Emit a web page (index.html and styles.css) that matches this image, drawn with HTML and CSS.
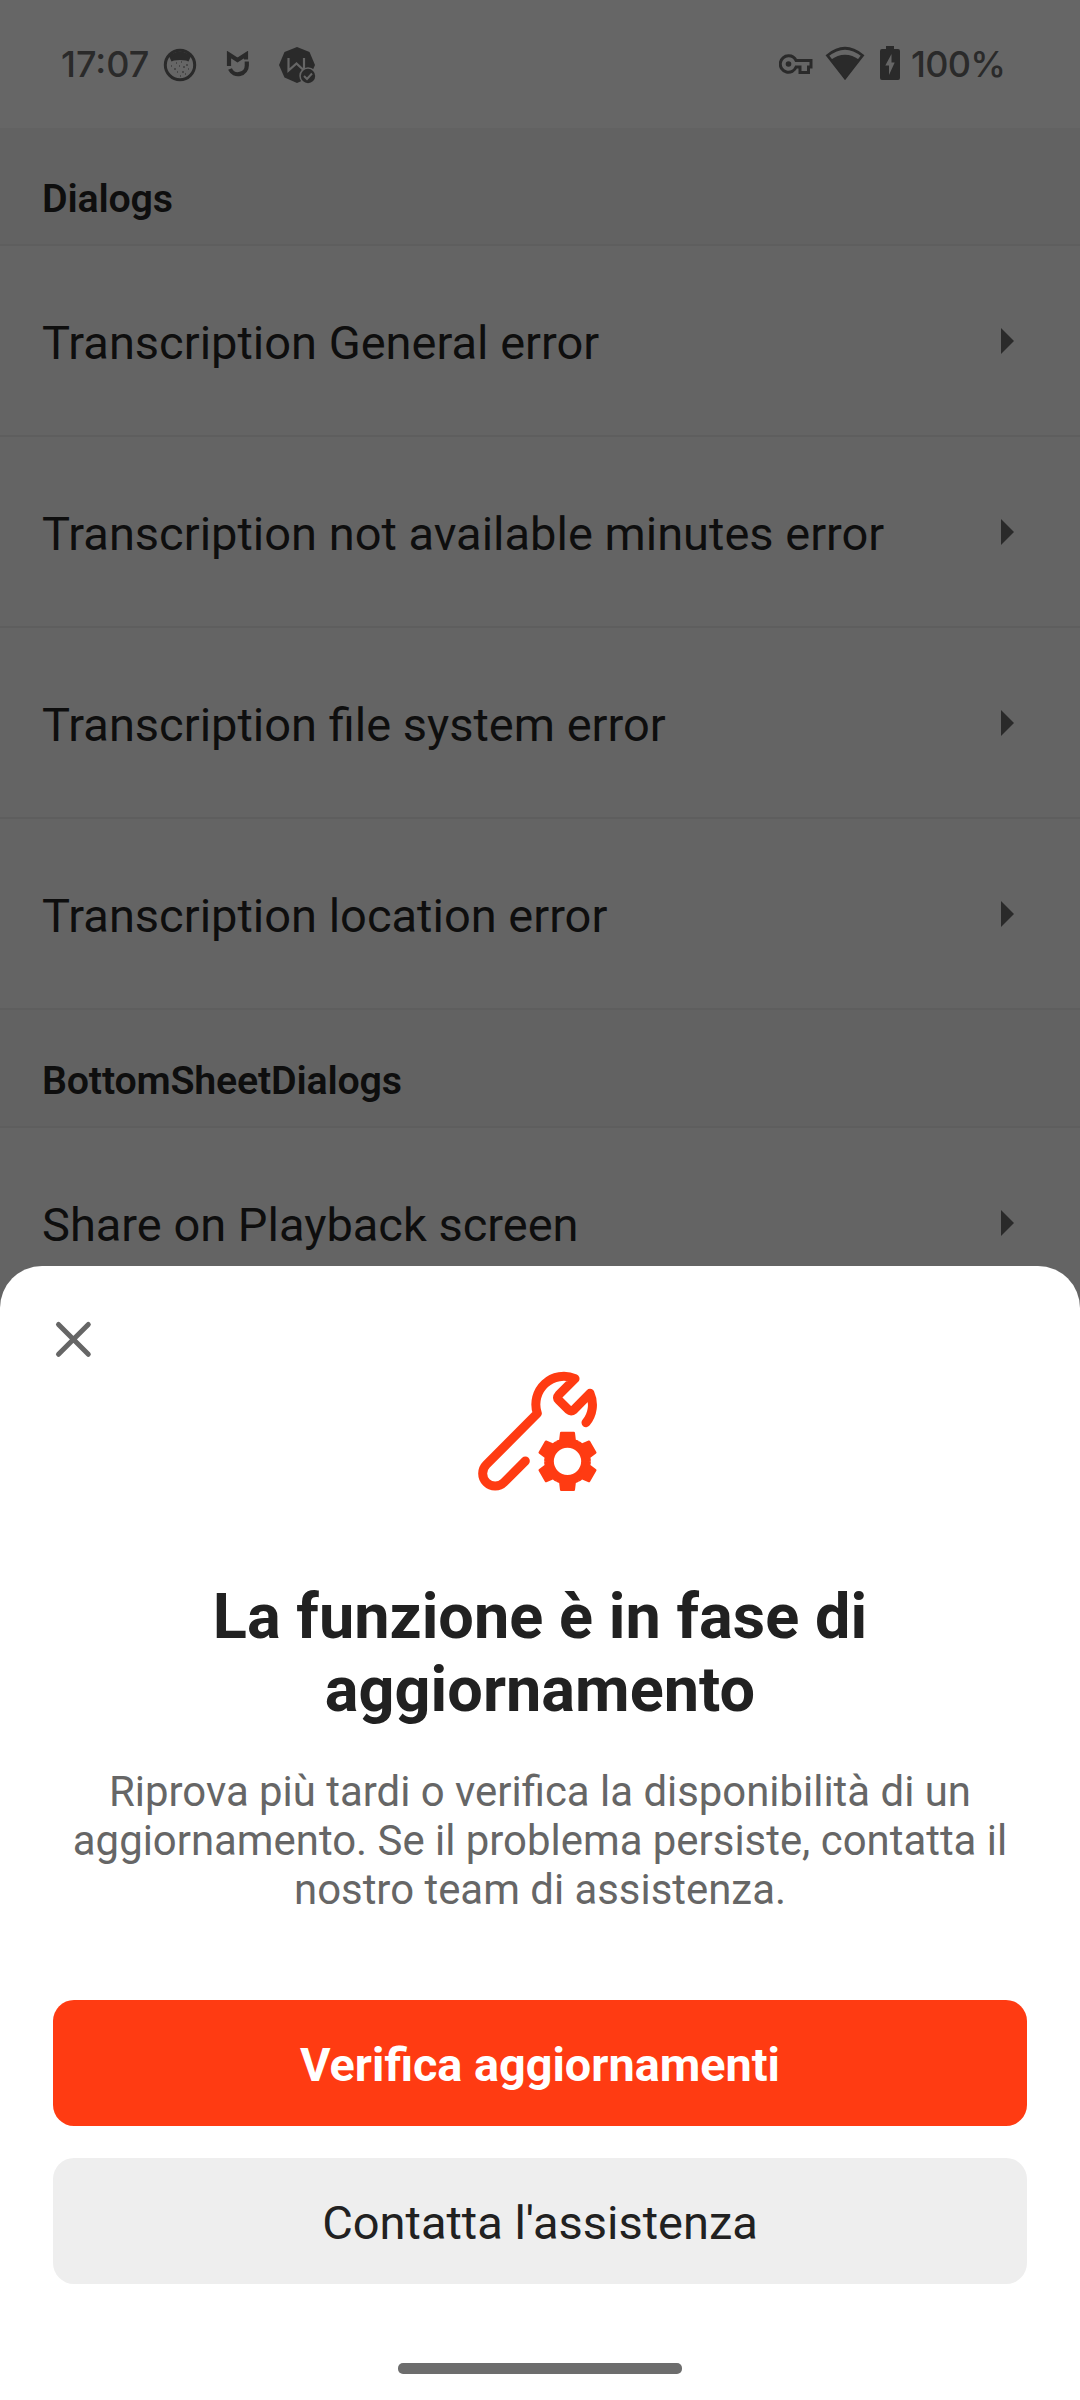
FILE: index.html
```html
<!DOCTYPE html>
<html lang="it">
<head>
<meta charset="utf-8">
<title>Dialogs</title>
<link rel="stylesheet" href="styles.css">
</head>
<body>
<div class="screen">
  <header class="status">
    <span class="clock">17:07</span>
    <svg class="ic-face" width="34" height="34" viewBox="0 0 34 34"><circle cx="17" cy="17" r="14.7" fill="none" stroke="#2a2a2a" stroke-width="3"/><path d="M6 8Q17-1 28 8L25.500 13.500L23 12.500Q17 11.500 11 12.500L8.500 13.500Z" fill="#2a2a2a"/><path d="M8 18h1M13 15h1M18 14h1M23 17h2M11 21h2M16 18h1M20 19h2M25 21h1M14 24h1M19 24h2M17 28h1M22 26h1" stroke="#2a2a2a" stroke-width="1.2"/></svg>
    <svg class="ic-shield" width="24" height="26" viewBox="0 0 24 26"><path d="M3 15V3.500L11.500 9L20 3.500V8.500M20.800 10.500V14A8.800 8.800 0 0 1 4 18" fill="none" stroke="#2a2a2a" stroke-width="4.200"/></svg>
    <svg class="ic-badge" width="38" height="38" viewBox="0 0 38 38"><path d="M19 1L31.500 6L37 19L31.500 31.500L19 37L6.500 31.500L1 19L6.500 6Z" fill="#2a2a2a"/><path d="M10.500 12V24.500L18.500 17.500L26 24.500V12" fill="none" stroke="#666" stroke-width="2.200"/><circle cx="30" cy="30" r="8.700" fill="#666"/><circle cx="30" cy="30" r="7.200" fill="#2a2a2a"/><path d="M26 30l3 3 5-5.500" fill="none" stroke="#666" stroke-width="2"/></svg>
    <span class="spacer"></span>
    <svg class="ic-key" width="34" height="20" viewBox="0 0 34 20"><path d="M9.500 1.800a8.200 8.200 0 1 0 7.600 11.200H21V18.500H29.500V13H32V6.500H17.100A8.200 8.200 0 0 0 9.500 1.800Z" fill="none" stroke="#2a2a2a" stroke-width="3"/><circle cx="9.500" cy="10" r="2.800" fill="#2a2a2a"/></svg>
    <svg class="ic-wifi" width="40" height="34" viewBox="0 0 40 34"><path d="M20 32L2.500 9.500Q20-5 37.500 9.500Z" fill="none" stroke="#2a2a2a" stroke-width="2.800"/><path d="M20 33L5.500 14Q20 3.500 34.500 14Z" fill="#2a2a2a"/></svg>
    <svg class="ic-batt" width="20" height="34" viewBox="0 0 20 34"><path d="M6 0H14V3H18Q20 3 20 5V32Q20 34 18 34H2Q0 34 0 32V5Q0 3 2 3H6Z" fill="#2a2a2a"/><path d="M11.500 8L5.300 19.500H9V29L14.700 16.500H11.500Z" fill="#666"/></svg>
    <span class="pct">100%</span>
  </header>

  <main class="list">
    <h2 class="group">Dialogs</h2>
    <div class="row"><span>Transcription General error</span><i class="arrow"></i></div>
    <div class="row"><span>Transcription not available minutes error</span><i class="arrow"></i></div>
    <div class="row"><span>Transcription file system error</span><i class="arrow"></i></div>
    <div class="row"><span>Transcription location error</span><i class="arrow"></i></div>
    <h2 class="group">BottomSheetDialogs</h2>
    <div class="row"><span>Share on Playback screen</span><i class="arrow"></i></div>
  </main>

  <section class="sheet">
    <svg class="close" width="40" height="40" viewBox="0 0 40 40"><path d="M5.500 5.500L35.300 35.300M35.300 5.500L5.500 35.300" stroke="#666" stroke-width="5" stroke-linecap="round"/></svg>
    <svg class="hero" width="160" height="160" viewBox="0 0 480 480">
      <path d="M196 333L132 397A37 37 0 0 1 79 344L232 190A84 84 0 0 1 345 86L297 134Q289 143 297 151L325 179Q333 186 342 179L390 130A84 84 0 0 1 378 218" fill="none" stroke="#ff3b12" stroke-width="27" stroke-linecap="round" stroke-linejoin="round"/>
      <g transform="translate(322.500 334)" fill="#ff3b12">
        <circle r="54" fill="none" stroke="#ff3b12" stroke-width="26"/>
        <path id="tooth" d="M-19-89H19Q22-89 22.500-86L25-65Q31-64 35-60L25-50H-25L-35-60Q-31-64-25-65L-22.500-86Q-22-89-19-89Z"/>
        <use href="#tooth" transform="rotate(60)"/><use href="#tooth" transform="rotate(120)"/><use href="#tooth" transform="rotate(180)"/><use href="#tooth" transform="rotate(240)"/><use href="#tooth" transform="rotate(300)"/>
      </g>
    </svg>
    <h1 class="title">La funzione è in fase di aggiornamento</h1>
    <p class="text">Riprova più tardi o verifica la disponibilità di un aggiornamento. Se il problema persiste, contatta il nostro team di assistenza.</p>
    <button class="btn primary">Verifica aggiornamenti</button>
    <button class="btn secondary">Contatta l'assistenza</button>
    <div class="home"></div>
  </section>
</div>
</body>
</html>
```
FILE: styles.css
```css
* { box-sizing: border-box; }
body { margin: 0; background: #646464; font-family: Roboto, sans-serif; }
.screen { position: relative; width: 1080px; height: 2400px; overflow: hidden; }

.status { display: flex; height: 128px; align-items: flex-start; padding: 0 76px 0 61px; background: #666; color: #2a2a2a; }
.status svg { display: block; flex: none; }
.clock, .pct { font: 500 36px/44px Inter, sans-serif; margin-top: 42px; white-space: nowrap; }
.clock { width: 102px; }
.pct { width: 93px; margin-left: 11px; letter-spacing: -0.7px; }
.spacer { flex: 1; }
.ic-face { margin-top: 48px; }
.ic-shield { margin: 51px 0 0 29px; }
.ic-badge { margin: 46px 0 0 28px; }
.ic-key { margin-top: 54px; }
.ic-wifi { margin: 46px 0 0 12px; }
.ic-batt { margin: 46px 0 0 15px; }

.group { display: flex; align-items: flex-end; height: 118px; margin: 0; padding: 0 42px 22px; background: #626262; border-bottom: 2px solid #5e5e5e; color: #0e0e0e; font-size: 39.375px; line-height: 46px; font-weight: 600; letter-spacing: -0.2px; }
.row { display: flex; align-items: center; justify-content: space-between; height: 191px; padding: 0 66px 0 42px; background: #646464; border-bottom: 2px solid #5e5e5e; color: #0e0e0e; font-size: 47px; }
.row span { padding-top: 4px; }
.arrow { border-style: solid; border-width: 13px 0 13px 13px; border-color: transparent transparent transparent #2a2a2a; }

.sheet { position: absolute; left: 0; top: 1266px; width: 1080px; height: 1134px; display: flex; flex-direction: column; align-items: center; padding: 53px 53px 0; background: #fff; border-radius: 42px 42px 0 0; }
.close { align-self: flex-start; flex: none; }
.hero { flex: none; margin-top: -9px; }
.title { margin: 70px 0 0; width: 760px; font-size: 63px; line-height: 73px; font-weight: 700; letter-spacing: 0.03px; text-align: center; color: #212121; }
.text { margin: 41px 0 86px; width: 974px; font-size: 41.9px; line-height: 49px; text-align: center; color: #666; }
.btn { flex: none; width: 974px; height: 126px; margin: 0 0 32px; padding: 4px 0 0; border: 0; border-radius: 21px; font: 400 47px/56px Roboto, sans-serif; color: #212121; background: #eee; }
.primary { background: #ff3b12; color: #fff; font-weight: 700; font-size: 46.8px; }
.home { width: 284px; height: 11px; margin-top: 47px; border-radius: 5px; background: #6d6d6d; }
```
